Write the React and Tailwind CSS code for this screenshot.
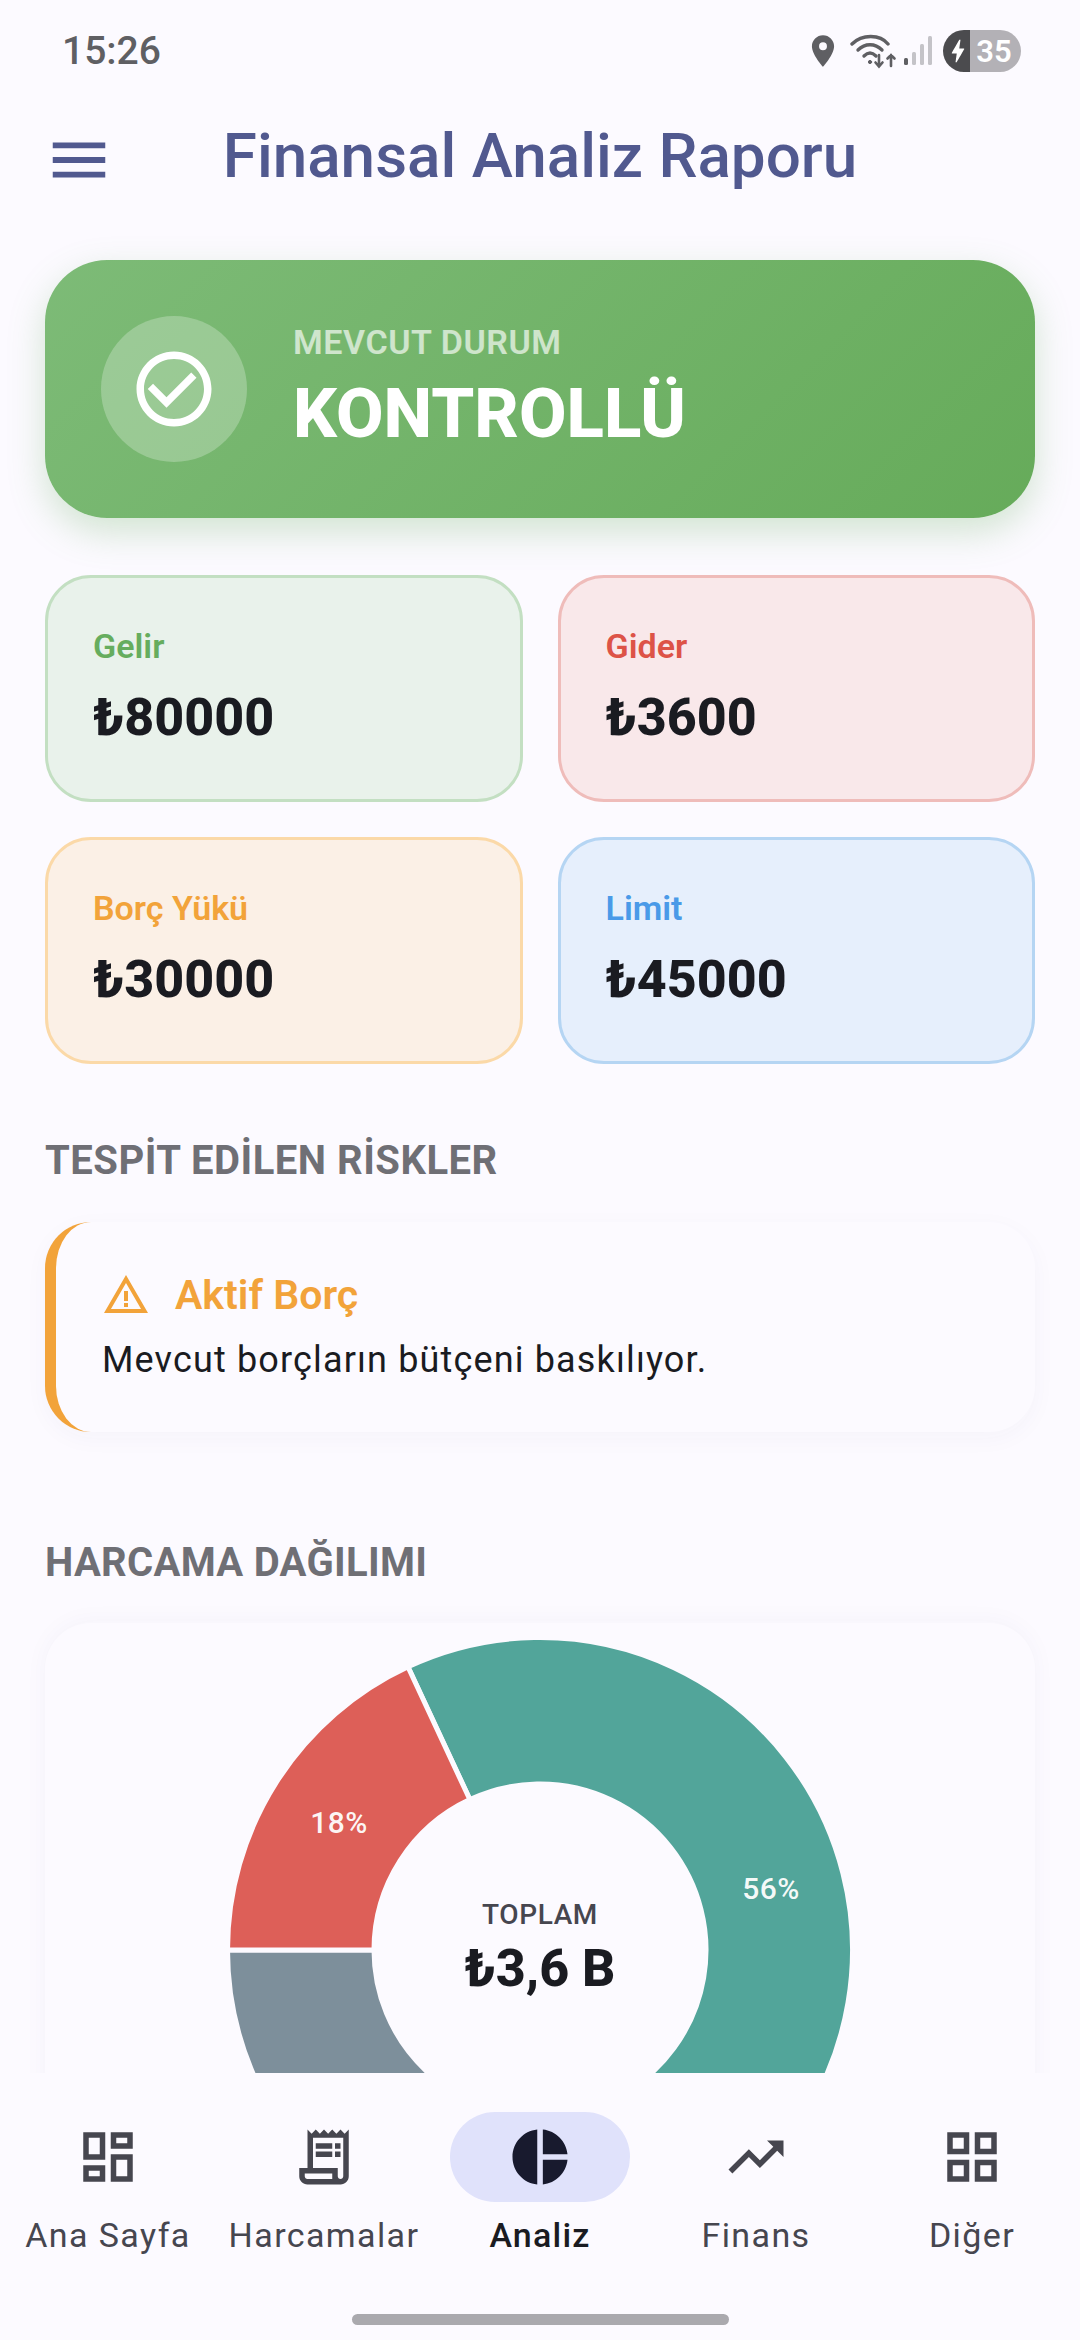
import React from "react";
import {
  MdMenu,
  MdCheckCircleOutline,
  MdOutlineDashboard,
  MdOutlineReceiptLong,
  MdPieChart,
  MdTrendingUp,
  MdOutlineGridView,
  MdWarningAmber,
  MdLocationOn,
  MdBolt,
} from "react-icons/md";

const CX = 313, CY = 313, R = 312.5, r = 166;
function wedge(a0, a1) {
  const p = (rad, a) => {
    const t = (a * Math.PI) / 180;
    return `${(CX + rad * Math.sin(t)).toFixed(2)} ${(CY - rad * Math.cos(t)).toFixed(2)}`;
  };
  const large = a1 - a0 > 180 ? 1 : 0;
  return `M${p(R, a0)} A${R} ${R} 0 ${large} 1 ${p(R, a1)} L${p(r, a1)} A${r} ${r} 0 ${large} 0 ${p(r, a0)} Z`;
}

function Stat({ label, value, box, tone }) {
  return (
    <div className={`h-[227px] rounded-[46px] border-[3px] pl-[45px] pt-[49px] ${box}`}>
      <div className={`text-[34px] leading-[38px] font-semibold ${tone}`}>{label}</div>
      <div className="mt-[23px] text-[52px] leading-[60px] font-extrabold text-[#1a1b21]">{value}</div>
    </div>
  );
}

function NavItem({ icon, label, active }) {
  return (
    <div className="flex flex-col items-center">
      <div className={`flex h-[90px] w-[180px] items-center justify-center rounded-full ${active ? "bg-[#e0e2fb] text-[#181a2e]" : "text-[#46464f]"}`}>
        {icon}
      </div>
      <div className={`mt-[14px] whitespace-nowrap text-[34px] leading-[38px] ${active ? "tracking-[1.2px] font-medium text-[#1a1b21]" : "tracking-[1.4px] font-normal text-[#46464f]"}`}>
        {label}
      </div>
    </div>
  );
}

export default function App() {
  return (
    <div className="flex h-[2340px] w-[1080px] flex-col overflow-hidden bg-[#fcfaff] font-['Roboto',sans-serif]">
      <div className="flex h-[84px] shrink-0 items-center justify-between pl-[62px] pr-[59px] pt-[18px]">
        <span className="text-[39px] leading-[44px] font-medium text-[#5f5f63]">15:26</span>
        <div className="flex items-center">
          <MdLocationOn className="h-[38px] w-[38px] text-[#5f5f63]" />
          <svg viewBox="0 0 48 36" className="ml-[8px] h-[36px] w-[48px]" fill="none" stroke="#5f5f63" strokeWidth="3.4" strokeLinecap="round">
            <path d="M2 11 C12 1 30 1 38 11" />
            <path d="M8 17 C15 10 25 10 32 17" />
            <path d="M14 23 C18 19 22 19 26 23" />
            <circle cx="20" cy="29" r="1.6" fill="#5f5f63" strokeWidth="1" />
            <path d="M29 22 V33 M25.5 29.5 L29 33.5 L32.5 29.5" strokeWidth="2.6" />
            <path d="M41 33 V22 M37.5 25.5 L41 22 L44.5 25.5" strokeWidth="2.6" />
          </svg>
          <svg viewBox="0 0 28 30" className="ml-[6px] h-[30px] w-[28px]">
            <rect x="0" y="22" width="4" height="7" rx="1.5" fill="#5f5f63" />
            <rect x="8" y="16" width="4" height="13" rx="1.5" fill="#c4c3c8" />
            <rect x="16" y="8" width="4" height="21" rx="1.5" fill="#c4c3c8" />
            <rect x="24" y="0" width="4" height="29" rx="1.5" fill="#c4c3c8" />
          </svg>
          <div className="ml-[11px] flex h-[42px] w-[78px] overflow-hidden rounded-full">
            <div className="flex w-[27px] items-center justify-center bg-[#4b4b4e] pl-[3px]">
              <MdBolt className="h-[30px] w-[30px] shrink-0 text-white" />
            </div>
            <div className="flex flex-1 items-center justify-center bg-[#b3b1b6] pr-[3px] text-[31px] font-semibold leading-none text-white">35</div>
          </div>
        </div>
      </div>

      <div className="relative flex h-[120px] shrink-0 items-center justify-center pt-[24px]">
        <MdMenu className="absolute left-[44px] top-[41px] h-[70px] w-[70px] text-[#51598f]" />
        <h1 className="text-[62px] leading-[70px] font-medium text-[#51598f]">Finansal Analiz Raporu</h1>
      </div>

      <main className="min-h-0 flex-1 overflow-hidden px-[45px] pt-[56px]">
        <section className="flex h-[258px] items-center rounded-[62px] bg-[linear-gradient(135deg,#7dbb77,#66ab5a)] pl-[56px] shadow-[0_14px_36px_rgba(102,171,91,0.28)]">
          <div className="flex h-[146px] w-[146px] items-center justify-center rounded-full bg-white/25">
            <MdCheckCircleOutline className="h-[90px] w-[90px] text-white" />
          </div>
          <div className="ml-[46px] -mt-[3px]">
            <div className="text-[34px] leading-[40px] font-semibold tracking-[0.55px] text-white/65">MEVCUT DURUM</div>
            <div className="mt-[12px] text-[69px] leading-[80px] font-extrabold text-white">KONTROLLÜ</div>
          </div>
        </section>

        <section className="mt-[57px] grid grid-cols-2 gap-x-[35px] gap-y-[35px]">
          <Stat label="Gelir" value="₺80000" box="border-[#c3dfc2] bg-[#e9f2eb]" tone="text-[#66ad5e]" />
          <Stat label="Gider" value="₺3600" box="border-[#efbcba] bg-[#f9e8ea]" tone="text-[#dd5347]" />
          <Stat label="Borç Yükü" value="₺30000" box="border-[#fbd9a8] bg-[#fbf0e6]" tone="text-[#f2a33a]" />
          <Stat label="Limit" value="₺45000" box="border-[#b5d5f3] bg-[#e6effc]" tone="text-[#4a9ae8]" />
        </section>

        <h2 className="mt-[75px] text-[40px] leading-[44px] font-bold tracking-[0.5px] text-[#6f6f75]">TESPİT EDİLEN RİSKLER</h2>

        <section className="mt-[39px] h-[210px] rounded-[46px] border-l-[11px] border-[#f2a33a] bg-[#fcfaff] pl-[46px] pt-[49px] shadow-[0_6px_24px_rgba(60,50,100,0.035)]">
          <div className="flex items-center">
            <MdWarningAmber className="h-[48px] w-[48px] text-[#f2a33a]" />
            <span className="ml-[25px] text-[41px] leading-[46px] font-semibold text-[#f2a33a]">Aktif Borç</span>
          </div>
          <p className="mt-[19px] text-[36px] leading-[44px] tracking-[1.15px] text-[#1a1b21]">Mevcut borçların bütçeni baskılıyor.</p>
        </section>

        <h2 className="mt-[109px] text-[40px] leading-[44px] font-bold tracking-[0.3px] text-[#6f6f75]">HARCAMA DAĞILIMI</h2>

        <section className="relative mt-[38px] h-[620px] rounded-[46px] bg-[#fcfaff] pt-[14px] shadow-[0_-2px_24px_rgba(60,50,100,0.035)]">
          <svg viewBox="0 0 626 626" className="mx-auto block h-[626px] w-[626px]">
            <path d={wedge(-25, 176.6)} fill="#52a59a" stroke="#fcfaff" strokeWidth="5" />
            <path d={wedge(176.6, 270)} fill="#7d8f9b" stroke="#fcfaff" strokeWidth="5" />
            <path d={wedge(270, 335)} fill="#dd5f58" stroke="#fcfaff" strokeWidth="5" />
          </svg>
          <span className="absolute left-[294px] top-[183px] -translate-x-1/2 text-[30px] leading-[34px] font-medium tracking-[0.5px] text-white/95">18%</span>
          <span className="absolute left-[726px] top-[249px] -translate-x-1/2 text-[30px] leading-[34px] font-medium tracking-[0.5px] text-white/95">56%</span>
          <div className="absolute left-0 right-0 top-[275px] flex flex-col items-center">
            <span className="text-[28px] leading-[34px] font-medium tracking-[0.6px] text-[#46464f]">TOPLAM</span>
            <span className="mt-[9px] text-[52px] leading-[56px] font-extrabold text-[#1a1b21]">₺3,6 B</span>
          </div>
        </section>
      </main>

      <nav className="relative h-[267px] shrink-0 bg-[#fcfaff] pt-[39px]">
        <div className="grid grid-cols-5">
          <NavItem icon={<MdOutlineDashboard className="h-[66px] w-[66px]" />} label="Ana Sayfa" />
          <NavItem icon={<MdOutlineReceiptLong className="h-[66px] w-[66px]" />} label="Harcamalar" />
          <NavItem icon={<MdPieChart className="h-[66px] w-[66px]" />} label="Analiz" active />
          <NavItem icon={<MdTrendingUp className="h-[66px] w-[66px]" />} label="Finans" />
          <NavItem icon={<MdOutlineGridView className="h-[66px] w-[66px]" />} label="Diğer" />
        </div>
        <div className="absolute bottom-[15px] left-[352px] h-[11px] w-[377px] rounded-full bg-[#aaa9ae]" />
      </nav>
    </div>
  );
}
